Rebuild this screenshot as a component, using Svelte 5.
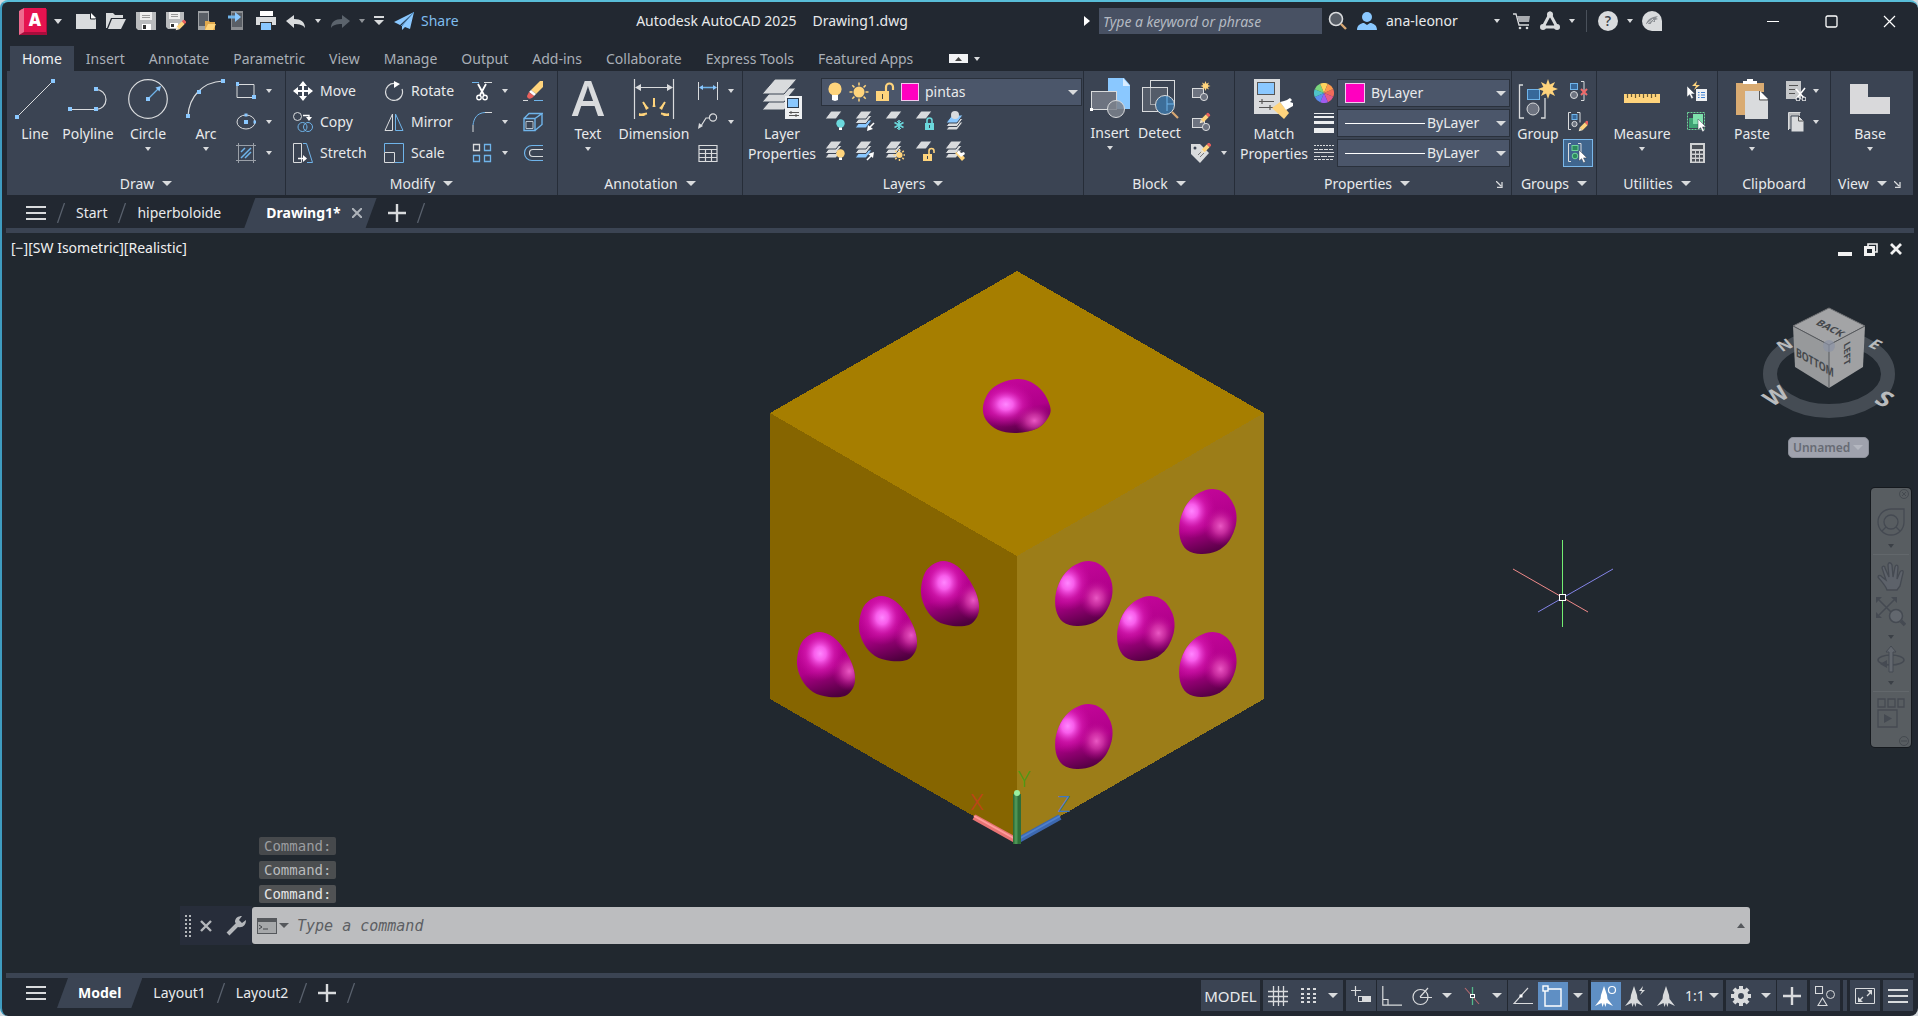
<script>
  const W = '#d9dbdd';
  const B = '#6fb4ea';
  const SKY = '#8ac8ff';
  const Y = '#ffd47c';
  const T = '#6bd8dc';
  const BG = '#3b4453';

  const dot = (x, y, s = 4) => `<rect x="${x - s / 2}" y="${y - s / 2}" width="${s}" height="${s}" fill="${SKY}"/>`;
  const line = (d, c = W, w = 1) => `<path d="${d}" fill="none" stroke="${c}" stroke-width="${w}"/>`;
  const fill = (d, c = W) => `<path d="${d}" fill="${c}"/>`;
  const sheet = (x, y, c = W) => `<path d="M${x + 6} ${y}h11l-6 8h-11z" fill="${c}" stroke="${BG}"/>`;
  const stack = (c1 = W, c2 = W, c3 = W) => sheet(0, 9, c3) + sheet(0, 4.5, c2) + sheet(0, 0, c1);
  const bulb = (x, y, c) => `<circle cx="${x}" cy="${y}" r="4.2" fill="${c}"/><rect x="${x - 1.5}" y="${y + 4}" width="3" height="2.5" fill="#fff"/>`;
  const sun = (x, y, r, len) =>
    `<circle cx="${x}" cy="${y}" r="${r}" fill="${Y}"/>` +
    [0, 45, 90, 135, 180, 225, 270, 315]
      .map((a) => `<path d="M${x} ${y - r - 1}v-${len}" stroke="${Y}" stroke-width="1.5" transform="rotate(${a} ${x} ${y})"/>`)
      .join('');
  const star = (x, y, r) => {
    const p = [];
    for (let i = 0; i < 16; i++) {
      const d = i % 2 ? r * 0.5 : r;
      const a = (i * Math.PI) / 8;
      p.push(`${(x + d * Math.sin(a)).toFixed(1)},${(y - d * Math.cos(a)).toFixed(1)}`);
    }
    return `<polygon points="${p.join(' ')}" fill="${Y}"/>`;
  };
  const pencil = (x, y) =>
    `<g transform="translate(${x} ${y}) rotate(45)"><rect x="-2" y="-6" width="4" height="3" rx="1" fill="#e8605c"/><rect x="-2" y="-3" width="4" height="7" fill="${Y}"/><path d="M-2 4h4l-2 3.5z" fill="#f3e6c8"/></g>`;
  const cursor = (x, y) => `<path transform="translate(${x} ${y})" d="M0 0v11l2.6-2.3 1.9 4 1.9-.9-1.9-3.9h3.5z" fill="#fff" stroke="${BG}" stroke-width=".5"/>`;
  const padlock = (x, y, c, open) =>
    `<rect x="${x}" y="${y}" width="9" height="7" fill="${c}"/>` +
    (open ? line(`M${x + 6} ${y}v-3a2.5 2.5 0 0 1 5 0v2`, c, 1.6) : line(`M${x + 2} ${y}v-2.5a2.5 2.5 0 0 1 5 0v2.5`, c, 1.6)) +
    `<rect x="${x + 4}" y="${y + 2}" width="1" height="3" fill="${BG}"/>`;
  const anno = 'M12 2l3 9 .5 4 5.500 7-6.500-3-1 4-1.500-4-1.500 4-1-4L3 22l5.500-7 .5-4z';

  // name: [width, height, markup]
  const icons = {
    logo: [28, 27, `${fill('M2 1h26v26H0V5z', '#a80d3c')}${fill('M5 0h22v24H5z', '#e5134f')}${fill('M0 3l5-3v24l-5 3z', '#ee6a8e')}<text x="16" y="18" text-anchor="middle" font-family="Open Sans, sans-serif" font-size="17" font-weight="800" fill="#fff">A</text>`],
    newFile: [20, 20, fill('M0 3h14l6 5v10H0z') + fill('M15 2l5 5h-5z', '#fff') + line('M14.500 3v5h5', '#23282f')],
    open: [20, 20, fill('M0 2h7l2 2h8v3H5L1 17H0z') + fill('M6 8h14l-5 10H2z')],
    save: [20, 20, fill('M0 1h20v18H2l-2-2z', '#b9bbbd') + fill('M4 1h12v8H4z', '#eee') + fill('M6 4h8v1H6zM6 6h8v1H6z', '#999') + fill('M6 13h9v6H6z', '#fff') + fill('M7 14h3v4H7z', '#333')],
    saveAs: [20, 20, fill('M0 1h18v12l-6 5H2l-2-2z', '#b9bbbd') + fill('M3 1h11v7H3z', '#eee') + fill('M5 3h7v1H5zM5 5h7v1H5z', '#999') + fill('M4 12h8v5H4z', '#fff') + fill('M5 13h3v3H5z', '#333') + pencil(15, 14)],
    phoneOpen: [20, 20, fill('M2 0h11v19H2z', '#a0a3a6') + fill('M3 2h9v13H3z', '#5a5f66') + fill('M9 10h4l1 1h5v8H9z', '#e0a94e') + fill('M12 13h8l-3 6H9z', Y)],
    phoneSave: [20, 20, fill('M5 0h12v19H5z', '#8a8d91') + fill('M6 2h10v14H6z', '#5a5f66') + line('M2 6h8', B, 3) + fill('M9 1l6 5-6 5z', SKY)],
    print: [20, 20, fill('M4 0h13v5H4z', '#fff') + fill('M0 6h20v8H0z') + fill('M4 11h12v8H4z', '#333') + fill('M5 12h10v7H5z', SKY)],
    undo: [20, 20, fill('M0 10l8-6v4c7 0 11 3 11 9-2-3-5-4-11-4v4z')],
    redo: [20, 20, fill('M20 10l-8-6v4C5 8 1 11 1 17c2-3 5-4 11-4v4z', '#5b636c')],
    qatMenu: [10, 10, fill('M0 0h10v2H0zM0 4h10L5 9z')],
    plane: [20, 20, fill('M20 1L0 11l6 3zM20 1L8 15v4l3-3 5 2z', SKY) + line('M20 1L7 15', '#4c8fc9')],
    arrowR: [6, 12, fill('M0 1l6 5-6 5z', '#fff')],
    search: [20, 20, `<circle cx="8" cy="8" r="6.5" fill="#575d66" stroke="${W}" stroke-width="1.6"/>` + line('M13 13l5 5', '#d8a873', 2.4)],
    person: [20, 20, `<circle cx="10" cy="6" r="5" fill="${SKY}"/>` + fill('M0 19c0-5 4-7 7-7l3 2 3-2c3 0 7 2 7 7z', SKY)],
    cart: [18, 18, line('M0 2h3l3 11h10', W, 1.3) + fill('M4 4h13l-1 6H6z', '#a9acb0') + `<circle cx="7" cy="16" r="1.3" fill="${W}"/><circle cx="14" cy="16" r="1.3" fill="${W}"/>`],
    a360: [20, 20, line('M10 3L3 16h14z', W, 3) + `<circle cx="10" cy="3.5" r="3" fill="${W}"/><circle cx="3" cy="16" r="3" fill="${W}"/><circle cx="17" cy="16" r="3" fill="${W}"/>`],
    help: [20, 20, `<circle cx="10" cy="10" r="10" fill="${W}"/><text x="10" y="15" text-anchor="middle" font-family="Open Sans, sans-serif" font-size="14" font-weight="600" fill="#3a4048">?</text>`],
    assist: [20, 20, fill('M10 0a10 10 0 0 1 10 10v10H10A10 10 0 0 1 10 0z') + fill('M4 13c2-5 5-7 12-8l-2 2 2 1-3 1v2l-3 0-1 2z', '#8a8e93') + line('M5 13l6-5M9 13l3-4', W)],
    min: [12, 12, line('M0 6.500h12', '#fff', 1)],
    max: [13, 13, '<rect x="1" y="1" width="11" height="11" rx="1.5" fill="none" stroke="#fff" stroke-width="1.3"/>'],
    close: [13, 13, line('M1 1l11 11M12 1L1 12', '#fff', 1.2)],
    ribbonToggle: [19, 9, fill('M0 0h19v9H0z', '#f2f3f5') + fill('M6 7h7L9.500 3z', '#444')],

    line: [40, 40, line('M2 38L38 2') + dot(2, 38) + dot(38, 2)],
    polyline: [40, 40, line('M2 30.500h26a10 10 0 0 0 0-20', W, 1.2) + dot(2, 30) + dot(28, 30) + dot(28, 10)],
    circle: [40, 40, `<circle cx="20" cy="20" r="19.3" fill="none" stroke="${W}" stroke-width="1.2"/>` + line('M20 20L30 10', B, 1.3) + fill('M33 7l-1.500 5.500-4-4z', SKY) + dot(20, 20)],
    arc: [40, 40, line('M2 37C3 18 16 3 37 2', W, 1.2) + dot(2, 37) + dot(13, 13) + dot(37, 2)],
    rect: [20, 20, line('M1 3.500h17v13H1z') + dot(1, 3) + dot(18, 16)],
    ellipse: [20, 20, `<ellipse cx="10" cy="10" rx="9" ry="7" fill="none" stroke="${W}"/>` + dot(10, 10) + dot(10, 3, 3) + dot(19, 10, 3)],
    hatch: [20, 20, line('M2.500 0v20M17.500 0v20M0 2.500h20M0 17.500h20', '#9aa0a8') + line('M5 9l4-4M5 15L15 5M9 15l6-6', B, 1.5)],

    move: [20, 20, line('M10 2v16M2 10h16', '#fff', 2) + fill('M10 0l4 5H6zM10 20l4-5H6zM0 10l5-4v8zM20 10l-5-4v8z', '#fff')],
    copy: [20, 20, `<circle cx="4.5" cy="4.5" r="4" fill="none" stroke="${W}"/><circle cx="9.5" cy="15" r="4.5" fill="none" stroke="${B}"/><circle cx="15" cy="15" r="4.5" fill="none" stroke="${B}"/>` + line('M10 3.500h6v3', '#fff', 1.3) + fill('M13 5h6l-3 4z', '#fff')],
    stretch: [20, 20, line('M.5 .5h8v19h-8z') + line('M10 .5h3.500l6 19H14', B) + line('M5 15.500h7', '#fff', 1.4) + fill('M10 12l4 3.500-4 3.500z', '#fff')],
    rotate: [20, 20, line('M11 2.500A8.500 8.500 0 1 0 18 8', W, 1.2) + fill('M10 0l6 3-6 4z', '#fff')],
    mirror: [20, 20, line('M8.500 2v16.500H1z') + line('M11.500 2v16.500H19z', B)],
    scale: [20, 20, line('M.5 9V.5h19v19H11', B) + line('M.5 9.500h10v10H.5z')],
    trim: [20, 20, line('M0 1.500h7', B) + line('M12 1.500h8', W) + line('M6 3l6 11M14 3L8 14', '#fff', 1.8) + '<circle cx="7" cy="16.5" r="2.2" fill="none" stroke="#fff" stroke-width="1.4"/><circle cx="13" cy="16.5" r="2.2" fill="none" stroke="#fff" stroke-width="1.4"/>'],
    fillet: [20, 20, line('M1 20v-7', W) + line('M1 13C2 6 5 1 13 .5', B) + line('M13 .5h7', W)],
    array: [20, 20, line('M1.500 12.500h6v6h-6zM12.500 12.500h6v6h-6zM12.500 1.500h6v6h-6z', B, 1.3) + line('M1.500 1.500h6v6h-6z', W, 1.3)],
    erase: [20, 20, fill('M8 9l9-9h3v6l-7 7z', Y) + fill('M8 9l5 4-2 2-5-4z', '#fff') + fill('M6 11l5 4c-3 4-7 3-7 0z', '#e8605c') + line('M0 19.500h5', W) + line('M11 19.500h9', B)],
    explode: [20, 20, line('M1 6.500h11v12H1zM1 6.500l5-5h13l-7 5M19 1.500v11l-7 6', B, 1.4) + line('M3 9.500h7v7H3z', '#b8c4d0')],
    offset: [20, 20, line('M20 2.500H9a7 7 0 0 0 0 15h11', B, 1.2) + line('M20 6.500H10a3.500 3.500 0 0 0 0 7h10', W, 1.2)],

    text: [40, 40, '<text x="20" y="37" text-anchor="middle" font-family="Open Sans, sans-serif" font-size="49" font-weight="600" fill="#d9dbdd">A</text>'],
    dimension: [40, 40, line('M.5 0v40M39.500 0v40', W, 1.2) + line('M3 8.500h34', W) + fill('M1 8.500l6-3.500v7zM39 8.500l-6-3.500v7z') + fill('M18.500 28l1.500-8 1.500 8zM12 31l-3-7 6 5zM28 31l3-7-6 5zM12 37H5v-3zM28 37h7v-3z', Y) + line('M20 19v8M9 23l4 6M31 23l-4 6M5 36l8-1.500M35 36l-8-1.500', Y, 2)],
    dimLinear: [20, 20, line('M.5 1v18M19.500 1v18') + line('M3 6.500h14', B, 1.3) + fill('M1 6.500l4-2.500v5zM19 6.500l-4-2.500v5z', SKY)],
    leader: [20, 20, `<circle cx="15" cy="5.5" r="3.6" fill="none" stroke="${W}" stroke-width="1.2"/>` + line('M11 6H8L3 14', W, 1.2) + fill('M0 17l1-6 4 3z')],
    table: [20, 20, line('M1 2.500h18v16H1zM1 6.500h18M1 10.500h18M1 14.500h18M7.500 7v11M13.500 7v11', W, 1.2)],

    layerProps: [40, 40, `<g fill="${W}" stroke="${BG}"><path d="M12 17h22L22 31H0z"/><path d="M12 9h22L22 23H0z"/><path d="M13 0h22L22 15H0z"/></g><rect x="23" y="17" width="17" height="23" fill="#eef0f2"/><rect x="25.5" y="19.5" width="11" height="9" fill="${SKY}" stroke="#2b3a4d"/>` + line('M27 33.500h10M27 36.500h10M29 32v3M34 35v3', '#555')],
    bulb: [16, 20, `<circle cx="8" cy="7" r="6.6" fill="${Y}"/>` + fill('M5 13h6v5l-3 1-3-1z', '#fff')],
    sun: [20, 20, sun(10, 10, 5.5, 3)],
    unlock: [20, 20, fill('M1 9h13v10H1z', Y) + line('M11 9V5a3.500 3.500 0 0 1 7 0v3', Y, 2.2) + fill('M7 12h1v5H7z', '#444')],
    layOff: [20, 20, sheet(0, 0) + bulb(15.5, 12.5, T)],
    layIso: [20, 20, stack(W, W, SKY) + line('M19 12l-4 4', '#fff', 1.6) + fill('M12 20l1-6 5 4z', '#fff')],
    layFrz: [20, 20, sheet(0, 0) + line('M14 9v10M9.500 11.500l9 5M18.500 11.500l-9 5', T, 1.6) + line('M12 10l2 2 2-2M12 18l2-2 2 2', T)],
    layLock: [20, 20, sheet(0, 0) + padlock(10, 12, T, false)],
    layCur: [20, 20, sheet(1, 11) + sheet(1, 7.5) + sheet(1, 4, SKY) + `<circle cx="10" cy="4" r="4" fill="${W}"/>`],
    layOn: [20, 20, stack() + bulb(15.5, 12.5, Y)],
    layUniso: [20, 20, stack(W, W, SKY) + line('M12 19l4-4', '#fff', 1.6) + fill('M19 11l-1 6-5-4z', '#fff')],
    layThaw: [20, 20, stack() + sun(14.5, 14, 3, 2)],
    layUnlock: [20, 20, sheet(0, 0) + padlock(8, 13, Y, true)],
    layMatch: [20, 20, stack() + fill('M10 12l4-2 6 7-3 3z', Y) + fill('M13 9l3 3 3-1 1 2-4 3-4-4z', '#fff')],

    insert: [40, 40, fill('M18 0h16l6 7v24H18z', SKY) + fill('M33 0v8h7z', '#d8ecff') + `<rect x="1.5" y="13.5" width="25" height="18" fill="#6d7380" stroke="${W}"/><circle cx="26" cy="31" r="8.5" fill="#7b818c" fill-opacity=".85" stroke="${W}"/><rect x="0" y="30" width="3" height="3" fill="#fff"/>`],
    detect: [40, 40, `<rect x="10.5" y="2.5" width="24" height="24" fill="none" stroke="${W}"/><rect x="2.5" y="9.5" width="25" height="24" fill="#6d7380" fill-opacity=".5" stroke="${W}"/><circle cx="25" cy="27" r="9.5" fill="#3d6e99" stroke="${W}"/>` + line('M27 18v15M27 26h7', B) + line('M32 34l6 6', '#d8a873', 2.2)],
    blockNew: [20, 20, `<rect x="1.5" y="7.5" width="11" height="9" fill="#6d7380" stroke="${W}"/><circle cx="13" cy="16" r="3.6" fill="#6d7380" stroke="${W}"/>` + star(14.5, 5, 5)],
    blockEdit: [20, 20, `<rect x="1.5" y="6.5" width="12" height="9" fill="#6d7380" stroke="${W}"/><circle cx="15" cy="15" r="3.6" fill="#6d7380" stroke="${W}"/>` + pencil(14, 6)],
    tag: [20, 20, fill('M0 1l9 0 9 9-9 10L0 11z') + `<circle cx="4" cy="5" r="1.5" fill="${BG}"/>` + line('M7 12l4-4M9 14l4-4', '#777') + pencil(15, 5)],

    match: [40, 40, fill('M0 0h26v35H0z') + `<rect x="3.5" y="3.5" width="17" height="12" fill="${SKY}" stroke="#555"/>` + line('M5 22.500h15M5 28.500h15M8 20v5M16 26v5', '#555', 1.2) + fill('M18 29l8-6 9 11-5 6z', Y) + fill('M26 23l6 8 7-4v-3l-3-1 2-2-2-2-3 2-3 1z', '#fff')],
    wheel: [20, 20, ['#f26b5b', '#e85a8a', '#a05cf0', '#5b8df0', '#4fc3c9', '#7ad67c', '#ffd35c', '#ff9a4d'].map((c, i) => `<path d="M10 10L10 0A10 10 0 0 1 17.1 2.9z" fill="${c}" transform="rotate(${i * 45 + 67} 10 10)"/>`).join('')],
    weights: [20, 20, fill('M0 0h20v1H0zM0 3h20v2H0zM0 8h20v3H0zM0 15h20v5H0z', '#eceef0')],
    ltypes: [20, 20, '<g stroke="#d9dbdd"><path d="M0 2.500h20" stroke-dasharray="2 1"/><path d="M0 6.500h20" stroke-dasharray="4 1"/><path d="M0 9.500h20"/><path d="M0 13.500h20" stroke-dasharray="6 1"/><path d="M0 16.500h20" stroke-dasharray="3 1"/></g>'],

    group: [40, 40, line('M5 6H1.500v33H6M23 39h4V19', W, 1.3) + `<rect x="9.5" y="10.5" width="12" height="10" fill="#37689a" stroke="${B}"/><circle cx="15" cy="30" r="6" fill="#6d7380" stroke="${W}"/>` + star(30, 10, 10)],
    ungroup: [20, 20, line('M13 .5h3v19h-3', W) + `<rect x="2.5" y="2.5" width="7" height="6" fill="#37689a" stroke="${B}"/><circle cx="6" cy="14" r="3.5" fill="#6d7380" stroke="${W}"/>` + line('M13 8l6 6M19 8l-6 6', '#ef6a6a', 2)],
    groupEdit: [20, 20, line('M3 .5H.5v17H3M9 .5h3v10', W) + `<rect x="4" y="2.5" width="5" height="5" fill="#37689a" stroke="${B}"/><circle cx="6.5" cy="12" r="2.6" fill="#6d7380" stroke="${W}"/>` + pencil(16, 14)],
    groupSel: [20, 20, line('M3 .5H.5v18H3M10 .5h3v10', W) + '<rect x="4" y="2.5" width="6" height="5" fill="#2c8a5d" stroke="#6fd49b"/><circle cx="7" cy="13" r="2.8" fill="#2c8a5d" stroke="#6fd49b"/>' + cursor(11, 7)],
    ruler: [40, 40, fill('M2 15h36v9H2z', Y) + line('M5.500 15v4M9.500 15v3M13.500 15v4M17.500 15v3M21.500 15v4M25.500 15v3M29.500 15v4M33.500 15v3', '#6b5a33', 1.2)],
    quickSel: [20, 20, fill('M10 0l-5 5h4l-2 4 6-5H9z', Y) + cursor(0, 5) + '<rect x="9" y="8" width="11" height="12" fill="#eef0f2"/>' + line('M14 11.500h4M14 14h4M14 16.500h4M11 11.500h1.500M11 14h1.500M11 16.500h1.500', '#3d7fd0', 1.2)],
    selAll: [20, 20, '<rect x=".5" y=".5" width="17" height="17" fill="none" stroke="#6fd49b" stroke-dasharray="2 1"/><path d="M2 6h9v10H2z" fill="#3fa374"/><path d="M6 2h10v10H6z" fill="#7ee0ac"/>' + cursor(11, 7)],
    calc: [20, 20, fill('M3 0h15v20H3z', '#cfd1d3') + fill('M5 2h11v4H5z', '#4a4f57') + [0, 4, 8].map((y) => [0, 4, 8].map((x) => `<rect x="${5 + x}" y="${8 + y}" width="3" height="2.5" fill="#4a4f57"/>`).join('')).join('')],
    paste: [40, 40, fill('M4 4h28v9H15v23H4z', '#d9ab72') + fill('M11 5V2h4V0h6v2h4v3z', '#fff') + fill('M13 12h14l9 9v19H13z') + fill('M28 12l8 8h-8z', '#fff') + line('M27.500 12v9H36', '#555')],
    cut: [20, 20, fill('M0 0h15v18H0z', '#c6c8ca') + line('M3 4.500h9M3 8.500h6M3 12.500h6', '#555', 1.2) + line('M10 8l8 9M19 7l-8 10', '#fff', 1.6) + `<circle cx="12" cy="18" r="2" fill="${BG}" stroke="#fff"/><circle cx="18" cy="18" r="2" fill="${BG}" stroke="#fff"/>`],
    copyClip: [20, 20, line('M2.500 18V.5h12', W) + fill('M3 1h11v16H3z', '#b9bbbd') + `<path d="M5 4h8l5 5v11H5z" fill="${W}" stroke="${BG}"/>` + line('M12.500 4v5h5', '#555')],
    base: [40, 40, fill('M0 5h18v13h22v17H0z', '#d9d9db')],
    launcher: [7, 7, line('M0 0l5 5M6 1v5.500H1', W, 1.3)],

    menu: [20, 14, fill('M0 0h20v2H0zM0 6h20v2H0zM0 12h20v2H0z')],
    slash: [8, 20, line('M7.500 0L.5 20', '#59616d', 1.3)],
    plus: [18, 18, line('M9 0v18M0 9h18', W, 2.4)],
    tabClose: [10, 10, line('M0 0l10 10M10 0L0 10', '#aeb3ba', 2)],
    vpMin: [14, 13, fill('M0 9h14v4H0z', '#f2f2f2')],
    vpMax: [14, 13, line('M4 3V1h9v8h-2', '#f2f2f2', 1.6) + '<rect x="1.5" y="4.5" width="8" height="7" fill="none" stroke="#f2f2f2" stroke-width="3"/>'],
    vpClose: [12, 12, line('M1 1l10 10M11 1L1 11', '#f2f2f2', 2.8)],

    navClose: [10, 10, '<circle cx="5" cy="5" r="4.5" fill="none" stroke="#454a50"/><path d="M3 3l4 4M7 3l-4 4" stroke="#454a50"/>'],
    navMin: [10, 10, '<circle cx="5" cy="5" r="4.5" fill="none" stroke="#454a50"/><path d="M2 5h6" stroke="#454a50"/>'],
    navWheel: [28, 28, '<g fill="none" stroke="#454a52" stroke-width="1.3"><path d="M14 1h13v13A13 13 0 1 1 14 1z"/><circle cx="14" cy="14" r="7"/><path d="M9 19l-4 4M19 19l4 4"/></g>'],
    navPan: [28, 30, '<path d="M10 29c-1-4-6-9-9-13 0-2 3-2 4 0l4 3-4-12c0-2 3-3 3 0l4 9-1-12c0-3 3-3 4 0l1 12 2-10c1-3 3-2 3 0l-1 12 3-7c1-2 4-2 3 1l-3 13-3 4z" fill="#5d626a" stroke="#454a52" stroke-width="1.3"/>'],
    navZoom: [30, 30, '<path d="M3 3l15 15M18 3L3 18" stroke="#454a52" stroke-width="1.5"/><path d="M0 0h6L0 6zM21 0v6l-6-6zM0 21v-6l6 6z" fill="#454a52"/><circle cx="20" cy="19" r="6.5" fill="#62676e" stroke="#454a52" stroke-width="1.5"/><path d="M25 24l4 4" stroke="#454a52" stroke-width="3.5"/>'],
    navOrbit: [28, 28, '<ellipse cx="14" cy="15" rx="13" ry="5" fill="none" stroke="#454a52" stroke-width="1.5"/><path d="M14 1l5 6h-3v20h-4V7H9z" fill="#62676e" stroke="#454a52"/><path d="M3 19l7-4v8z" fill="#454a52"/>'],
    navMotion: [28, 30, '<g fill="none" stroke="#454a52" stroke-width="1.3"><path d="M1 1h7v8H1zM11 1h7v8h-7zM21 1h6v8h-6zM1 12h19v17H1z"/></g><path d="M7 16l8 4.500L7 25z" fill="#454a52"/>'],

    grip: [6, 22, [0, 4, 8, 12, 16, 20].map((y) => fill(`M0 ${y}h2v2H0zM4 ${y}h2v2H4z`, '#b4b7bb')).join('')],
    cmdClose: [12, 12, line('M1 1l10 10M11 1L1 11', '#b4b7bb', 2.4)],
    wrench: [20, 20, line('M2 18L12 8', '#b4b7bb', 4) + fill('M9 6c0-4 3-6 7-6l-3 4 3 3 4-3c0 5-3 8-8 7z', '#b4b7bb')],
    prompt: [20, 16, '<rect x=".5" y=".5" width="19" height="15" fill="#a6a8aa" stroke="#55585c"/><path d="M0 0h20v4H0z" fill="#55585c"/><path d="M2 7l3 2-3 2M6 11h5" fill="none" stroke="#44474b"/>'],

    sbGrid: [20, 20, line('M5.500 0v20M10.500 0v20M15.500 0v20M0 5.500h20M0 10.500h20M0 15.500h20', W, 1.3)],
    sbSnap: [20, 20, [2, 7, 11, 15].map((y) => [3, 9, 15].map((x) => fill(`M${x} ${y}h3v2h-3z`)).join('')).join('')],
    sbDyn: [20, 20, line('M4.500 0v10M0 4.500h10', W, 1.2) + `<rect x="7.5" y="10.5" width="12" height="5" fill="${W}" stroke="${W}"/>` + fill('M8 11h3v4H8z', BG)],
    sbOrtho: [20, 20, line('M.8 0v19.200H20M.8 13.500H6v6', W, 1.2)],
    sbPolar: [20, 20, `<circle cx="8.5" cy="11" r="7.5" fill="none" stroke="${W}" stroke-width="1.2"/>` + line('M8 11.500h12M8 11l8-9', W, 1.2)],
    sbIso: [20, 20, line('M10.500 1v18', '#55b98a', 1.3) + line('M3 2l14 16', '#b96a70', 1.1) + `<rect x="8.5" y="8.5" width="4" height="3" fill="${BG}" stroke="#fff"/>`],
    sbTrack: [20, 20, line('M15 2L1 17.500h19', W, 1.2) + '<rect x="6.5" y="8.5" width="3" height="3" fill="#fff"/>'],
    sbOsnap: [22, 22, line('M3 6v15h16V4H6', '#fff', 1.4) + '<rect x="1" y="1" width="5" height="5" fill="#5f8fc4" stroke="#fff" stroke-width="1.4"/>'],
    sbAnnoVis: [24, 24, `<g transform="translate(-2 0)">${fill(anno, '#fff')}</g><circle cx="18" cy="6" r="3.5" fill="none" stroke="#fff" stroke-width="1.2"/>`],
    sbAnnoAuto: [24, 24, `<g transform="translate(-2 0)">${fill(anno)}</g>` + fill('M19 2l-4 5h3l-2 4 5-5h-3z')],
    sbAnno: [24, 24, fill(anno)],
    sbGear: [20, 20, `<circle cx="10" cy="10" r="5.2" fill="none" stroke="${W}" stroke-width="4.5"/>` + [0, 45, 90, 135, 180, 225, 270, 315].map((a) => `<path d="M8 0h4v4H8z" fill="${W}" transform="rotate(${a} 10 10)"/>`).join('')],
    sbIsolate: [20, 20, line('M.5 .5h7v7h-7zM7.500 12l4.500 7.500H3z', W, 1.1) + `<circle cx="15.5" cy="8.5" r="4" fill="none" stroke="${W}"/>`],
    sbFull: [20, 16, line('M.5 .5h19v15H.5z', W) + line('M12 8l4-4M8 9l-4 4', W, 1.3) + fill('M17 2v5l-5-5zM3 14V9l5 5z')]
  };

  const quick = ['newFile', 'open', 'save', 'saveAs', 'phoneOpen', 'phoneSave', 'print', 'undo'];
  const ribbonTabs = ['Home', 'Insert', 'Annotate', 'Parametric', 'View', 'Manage', 'Output', 'Add-ins', 'Collaborate', 'Express Tools', 'Featured Apps'];
  const layerTools = ['layOff', 'layIso', 'layFrz', 'layLock', 'layCur', 'layOn', 'layUniso', 'layThaw', 'layUnlock', 'layMatch'];
  const history = ['Command:', 'Command:', 'Command:'];
  const status = [
    { items: ['sbGrid', 'sbSnap', 'caret'] },
    { items: ['sbDyn'] },
    { items: ['sbOrtho', 'sbPolar', 'caret', 'sbIso', 'caret'], tight: true },
    { items: ['sbTrack', 'sbOsnap', 'caret'], tight: true },
    { items: ['sbAnnoVis', 'sbAnnoAuto', 'sbAnno', 'scale'] },
    { items: ['sbGear', 'caret'] },
    { items: ['plus'], tight: true },
    { items: ['sbIsolate'] },
    { items: [] },
    { items: ['sbFull'] },
    { items: ['menu'] }
  ];
  const active = ['sbOsnap', 'sbAnnoVis'];

  const outlines = {
    top: [[34, 0], [48, 3], [60, 13], [67, 27], [66, 37], [55, 49], [34, 54], [15, 51], [3, 41], [0, 28], [6, 13], [18, 4]],
    left: [[23, 0], [36, 5], [47, 17], [55, 32], [58, 45], [56, 56], [48, 64], [32, 65], [16, 60], [5, 48], [0, 32], [3, 14], [11, 4]],
    right: [[34, 0], [47, 5], [56, 19], [57, 35], [50, 52], [38, 62], [22, 65], [8, 61], [1, 49], [1, 32], [8, 15], [20, 4]]
  };
  // highlight and secondary glint centres on each kind of pip
  const lights = {
    top: { shine: ['.34', '.47'], glint: ['.76', '.77'] },
    left: { shine: ['.4', '.33'], glint: ['.9', '.6'] },
    right: { shine: ['.22', '.34'], glint: ['.72', '.57'] }
  };
  const pips = [
    { face: 'top', x: 217, y: 111 },
    { face: 'left', x: 31, y: 364 },
    { face: 'left', x: 93, y: 328 },
    { face: 'left', x: 155, y: 293 },
    { face: 'right', x: 413, y: 221 },
    { face: 'right', x: 289, y: 293 },
    { face: 'right', x: 351, y: 328 },
    { face: 'right', x: 413, y: 364 },
    { face: 'right', x: 289, y: 436 }
  ];

  // closed Catmull-Rom curve through the outline points
  function outline(p) {
    const n = p.length;
    let d = `M${p[0]}`;
    for (let i = 0; i < n; i++) {
      const a = p[(i + n - 1) % n];
      const b = p[i];
      const c = p[(i + 1) % n];
      const e = p[(i + 2) % n];
      d += `C${b[0] + (c[0] - a[0]) / 6} ${b[1] + (c[1] - a[1]) / 6} ${c[0] - (e[0] - b[0]) / 6} ${c[1] - (e[1] - b[1]) / 6} ${c}`;
    }
    return d + 'z';
  }
</script>

{#snippet icon(name)}
  {@const [w, h, body] = icons[name]}
  <svg width={w} height={h} viewBox="0 0 {w} {h}" aria-hidden="true">{@html body}</svg>
{/snippet}

{#snippet caret(size = 'small')}
  <span class="caret {size}"></span>
{/snippet}

{#snippet big(name, label, arrow = false)}
  <button class="big">
    {@render icon(name)}
    <span>{label}</span>
    {#if arrow}{@render caret()}{/if}
  </button>
{/snippet}

{#snippet tool(name, arrow = false)}
  <div class="row">
    <button class="tool" aria-label={name}>{@render icon(name)}</button>
    {#if arrow}<button class="drop" aria-label="{name} options">{@render caret()}</button>{/if}
  </div>
{/snippet}

{#snippet labelled(name, label)}
  <div class="row"><button class="tool labelled">{@render icon(name)}{label}</button></div>
{/snippet}

{#snippet foot(title, arrow = true, launch = false)}
  <footer>
    <button>{title}{#if arrow}{@render caret('large')}{/if}</button>
    {#if launch}<button class="launch" aria-label="{title} settings">{@render icon('launcher')}</button>{/if}
  </footer>
{/snippet}

<div class="window">
  <header class="titlebar">
    <div class="quick">
      <button class="app" aria-label="AutoCAD">{@render icon('logo')}{@render caret('mid')}</button>
      {#each quick as name}
        <button aria-label={name}>{@render icon(name)}</button>
      {/each}
      <button class="nudge" aria-label="Undo history">{@render caret()}</button>
      <button aria-label="redo">{@render icon('redo')}</button>
      <button class="nudge dim" aria-label="Redo history">{@render caret()}</button>
      <button aria-label="Customize">{@render icon('qatMenu')}</button>
      <button class="share">{@render icon('plane')}Share</button>
    </div>
    <h1><span>Autodesk AutoCAD 2025</span><span>Drawing1.dwg</span></h1>
    <div class="info">
      {@render icon('arrowR')}
      <input class="search" type="text" placeholder="Type a keyword or phrase" aria-label="Search" />
      <button aria-label="Search">{@render icon('search')}</button>
      {@render icon('person')}
      <button class="account"><span>ana-leonor</span>{@render caret()}</button>
      <button aria-label="Store">{@render icon('cart')}</button>
      <button aria-label="Apps">{@render icon('a360')}</button>
      {@render caret()}
      <span class="sep"></span>
      <button aria-label="Help">{@render icon('help')}</button>
      {@render caret()}
      <button aria-label="Assistant">{@render icon('assist')}</button>
    </div>
    <div class="controls">
      <button aria-label="Minimize">{@render icon('min')}</button>
      <button aria-label="Maximize">{@render icon('max')}</button>
      <button aria-label="Close">{@render icon('close')}</button>
    </div>
  </header>

  <nav class="ribbon-tabs">
    {#each ribbonTabs as tab, i}
      <button class:active={i === 0}>{tab}</button>
    {/each}
    <button class="collapse" aria-label="Minimize ribbon">{@render icon('ribbonToggle')}{@render caret()}</button>
  </nav>

  <div class="ribbon">
    <section class="panel draw">
      <div class="body">
        {@render big('line', 'Line')}
        {@render big('polyline', 'Polyline')}
        {@render big('circle', 'Circle', true)}
        {@render big('arc', 'Arc', true)}
        <div class="stack">
          {@render tool('rect', true)}
          {@render tool('ellipse', true)}
          {@render tool('hatch', true)}
        </div>
      </div>
      {@render foot('Draw')}
    </section>

    <section class="panel modify">
      <div class="body">
        <div class="stack">
          {@render labelled('move', 'Move')}
          {@render labelled('copy', 'Copy')}
          {@render labelled('stretch', 'Stretch')}
        </div>
        <div class="stack">
          {@render labelled('rotate', 'Rotate')}
          {@render labelled('mirror', 'Mirror')}
          {@render labelled('scale', 'Scale')}
        </div>
        <div class="stack">
          {@render tool('trim', true)}
          {@render tool('fillet', true)}
          {@render tool('array', true)}
        </div>
        <div class="stack">
          {@render tool('erase')}
          {@render tool('explode')}
          {@render tool('offset')}
        </div>
      </div>
      {@render foot('Modify')}
    </section>

    <section class="panel annotation">
      <div class="body">
        {@render big('text', 'Text', true)}
        {@render big('dimension', 'Dimension')}
        <div class="stack">
          {@render tool('dimLinear', true)}
          {@render tool('leader', true)}
          {@render tool('table')}
        </div>
      </div>
      {@render foot('Annotation')}
    </section>

    <section class="panel layers">
      <div class="body">
        {@render big('layerProps', 'Layer Properties')}
        <div class="stack">
          <div class="combo layer">
            {@render icon('bulb')}
            {@render icon('sun')}
            {@render icon('unlock')}
            <span class="swatch"></span>
            <select aria-label="Layer"><option>pintas</option></select>
            {@render caret('large')}
          </div>
          <div class="grid">
            {#each layerTools as name}
              <button class="tool" aria-label={name}>{@render icon(name)}</button>
            {/each}
          </div>
        </div>
      </div>
      {@render foot('Layers')}
    </section>

    <section class="panel block">
      <div class="body">
        {@render big('insert', 'Insert', true)}
        {@render big('detect', 'Detect')}
        <div class="stack">
          {@render tool('blockNew')}
          {@render tool('blockEdit')}
          {@render tool('tag', true)}
        </div>
      </div>
      {@render foot('Block')}
    </section>

    <section class="panel properties">
      <div class="body">
        {@render big('match', 'Match Properties')}
        <div class="stack">
          <div class="prop">
            {@render icon('wheel')}
            <div class="combo">
              <span class="swatch"></span>
              <select aria-label="Object color"><option>ByLayer</option></select>
              {@render caret('large')}
            </div>
          </div>
          <div class="prop">
            {@render icon('weights')}
            <div class="combo">
              <span class="stroke"></span>
              <select aria-label="Lineweight"><option>ByLayer</option></select>
              {@render caret('large')}
            </div>
          </div>
          <div class="prop">
            {@render icon('ltypes')}
            <div class="combo">
              <span class="stroke"></span>
              <select aria-label="Linetype"><option>ByLayer</option></select>
              {@render caret('large')}
            </div>
          </div>
        </div>
      </div>
      {@render foot('Properties', true, true)}
    </section>

    <section class="panel groups">
      <div class="body">
        {@render big('group', 'Group')}
        <div class="stack">
          {@render tool('ungroup')}
          {@render tool('groupEdit')}
          <div class="row"><button class="tool on" aria-label="Group selection">{@render icon('groupSel')}</button></div>
        </div>
      </div>
      {@render foot('Groups')}
    </section>

    <section class="panel utilities">
      <div class="body">
        {@render big('ruler', 'Measure', true)}
        <div class="stack">
          {@render tool('quickSel')}
          {@render tool('selAll')}
          {@render tool('calc')}
        </div>
      </div>
      {@render foot('Utilities')}
    </section>

    <section class="panel clipboard">
      <div class="body">
        {@render big('paste', 'Paste', true)}
        <div class="stack">
          {@render tool('cut', true)}
          {@render tool('copyClip', true)}
        </div>
      </div>
      {@render foot('Clipboard', false)}
    </section>

    <section class="panel view">
      <div class="body">
        {@render big('base', 'Base', true)}
      </div>
      {@render foot('View', true, true)}
    </section>
  </div>

  <nav class="file-tabs">
    <button aria-label="Menu">{@render icon('menu')}</button>
    {@render icon('slash')}
    <button>Start</button>
    {@render icon('slash')}
    <button>hiperboloide</button>
    <button class="active">Drawing1*{@render icon('tabClose')}</button>
    <button aria-label="New drawing">{@render icon('plus')}</button>
    {@render icon('slash')}
  </nav>

  <main class="viewport">
    <div class="vp-head">
      <span>[−][SW Isometric][Realistic]</span>
      <div>
        <button aria-label="Minimize drawing">{@render icon('vpMin')}</button>
        <button aria-label="Restore drawing">{@render icon('vpMax')}</button>
        <button aria-label="Close drawing">{@render icon('vpClose')}</button>
      </div>
    </div>

    <svg class="scene" width="502" height="580" viewBox="0 0 502 580">
      <defs>
        <linearGradient id="shade" x1=".35" y1="0" x2=".6" y2="1">
          <stop offset="0" stop-color="#c4069a" />
          <stop offset=".55" stop-color="#b0008a" />
          <stop offset="1" stop-color="#4e003e" />
        </linearGradient>
        {#each Object.entries(lights) as [face, { shine, glint }]}
          <radialGradient id="shine-{face}" cx={shine[0]} cy={shine[1]} r=".42">
            <stop offset="0" stop-color="#ff86ff" />
            <stop offset=".25" stop-color="#fb62f0" stop-opacity=".95" />
            <stop offset=".6" stop-color="#dc20b8" stop-opacity=".55" />
            <stop offset="1" stop-color="#c80aa0" stop-opacity="0" />
          </radialGradient>
          <radialGradient id="glint-{face}" cx={glint[0]} cy={glint[1]} r=".3">
            <stop offset="0" stop-color="#ea58c4" />
            <stop offset=".4" stop-color="#dc3cb0" stop-opacity=".7" />
            <stop offset="1" stop-color="#b8008f" stop-opacity="0" />
          </radialGradient>
        {/each}
      </defs>
      <g shape-rendering="crispEdges">
        <path d="M251 3L498 145 251 288 4 145z" fill="#a67e00" />
        <path d="M4 145l247 143v285L4 431z" fill="#866500" />
        <path d="M498 145L251 288v285l247-142z" fill="#9c7d18" />
      </g>
      {#each pips as pip}
        {@const d = outline(outlines[pip.face])}
        <g transform="translate({pip.x} {pip.y})">
          <path {d} fill="url(#shade)" />
          <path {d} fill="url(#shine-{pip.face})" />
          <path {d} fill="url(#glint-{pip.face})" />
        </g>
      {/each}
      <g class="axis">
        <path d="M251 573l-43-24" stroke="#e87474" stroke-width="6" />
        <path d="M251 572l-43-24" stroke="#ff9c9c" stroke-width="2" />
        <path d="M251 573l43-24" stroke="#3c68b0" stroke-width="6" />
        <path d="M251 572l43-24" stroke="#4f80cc" stroke-width="2" />
        <path d="M251 576v-50" stroke="#2f6e38" stroke-width="8" />
        <path d="M250 576v-50" stroke="#4d9455" stroke-width="3" />
        <circle cx="251" cy="525" r="3" fill="#9af0a0" />
        <text x="211" y="542" fill="#c0431c">X</text>
        <text x="258" y="519" fill="#4f9a14">Y</text>
        <text x="298" y="544" fill="#3d78c4">Z</text>
      </g>
    </svg>

    <svg class="crosshair" width="102" height="90" viewBox="0 0 102 90">
      <path d="M1 30l75 43" stroke="#ef8a8a" />
      <path d="M101 30L26 73" stroke="#8484e8" />
      <path d="M50 1h1v87h-1z" fill="#72ee72" />
      <rect x="47.5" y="55.5" width="6" height="6" fill="#21282f" stroke="#fff" />
    </svg>

    <svg class="viewcube" width="178" height="130" viewBox="0 0 178 130">
      <ellipse cx="89" cy="84" rx="59" ry="37" fill="none" stroke="#454c54" stroke-width="14" />
      <g class="compass">
        <text transform="matrix(.9 -.4 .6 .7 42 62)" font-size="17">N</text>
        <text transform="matrix(.9 .4 -.7 .6 127 56)" font-size="17">E</text>
        <text transform="matrix(.85 -.5 .7 .7 32 117)" font-size="23">W</text>
        <text transform="matrix(.9 .45 -.6 .7 133 112)" font-size="25">S</text>
      </g>
      <path d="M89 18l36 18-36 19-36-19z" fill="#a3a4a6" stroke="#6f7174" />
      <path d="M53 36l36 19v43L55 77z" fill="#97999b" />
      <path d="M125 36L89 55v43l34-21z" fill="#a0a1a3" />
      <path d="M53 36l36 19 36-19M89 55v43" fill="none" stroke="#55585c" />
      <circle cx="89" cy="56" r="6" fill="#8b93a5" opacity=".7" />
      <g class="faces">
        <text transform="matrix(.87 .45 -.7 .6 75 34)" font-size="11">BACK</text>
        <text transform="matrix(.8 .45 0 1.1 56 66)" font-size="11">BOTTOM</text>
        <text transform="matrix(0 1 -.87 .5 104 54)" font-size="10">LEFT</text>
      </g>
    </svg>

    <div class="ucs">
      <select aria-label="Coordinate system"><option>Unnamed</option></select>
      {@render caret('large')}
    </div>

    <div class="navbar">
      <button class="edge" aria-label="Close bar">{@render icon('navClose')}</button>
      <button aria-label="Wheel">{@render icon('navWheel')}</button>
      {@render caret()}
      <hr />
      <button aria-label="Pan">{@render icon('navPan')}</button>
      <button aria-label="Zoom">{@render icon('navZoom')}</button>
      {@render caret()}
      <button aria-label="Orbit">{@render icon('navOrbit')}</button>
      {@render caret()}
      <hr />
      <button aria-label="ShowMotion">{@render icon('navMotion')}</button>
      <button class="edge last" aria-label="Bar options">{@render icon('navMin')}</button>
    </div>

    <div class="command">
      <div class="history">
        {#each history as text}
          <span>{text}</span>
        {/each}
      </div>
      <div class="line">
        <div class="handle">
          {@render icon('grip')}
          <button aria-label="Close command line">{@render icon('cmdClose')}</button>
          <button aria-label="Customize">{@render icon('wrench')}</button>
        </div>
        <label class="entry">
          {@render icon('prompt')}
          {@render caret('large')}
          <input type="text" placeholder="Type a command" aria-label="Command" />
          <span class="caret up"></span>
        </label>
      </div>
    </div>
  </main>

  <div class="bottom">
    <nav class="layouts">
      <button aria-label="Layouts">{@render icon('menu')}</button>
      <button class="active">Model</button>
      <button>Layout1</button>
      {@render icon('slash')}
      <button>Layout2</button>
      {@render icon('slash')}
      <button aria-label="New layout">{@render icon('plus')}</button>
      {@render icon('slash')}
    </nav>
    <div class="status">
      <div class="cell"><button class="model">MODEL</button></div>
      {#each status as group}
        <div class="cell" class:tight={group.tight} class:empty={!group.items.length}>
          {#each group.items as name}
            {#if name === 'caret'}
              <button class="arrow" aria-label="Options">{@render caret('large')}</button>
            {:else if name === 'scale'}
              <button class="ratio">1:1{@render caret('large')}</button>
            {:else}
              <button class="slot" class:on={active.includes(name)} aria-label={name}>{@render icon(name)}</button>
            {/if}
          {/each}
        </div>
      {/each}
    </div>
  </div>
</div>

<style>
  :global(body) {
    background: #d5dade;
  }
  .window {
    box-sizing: border-box;
    display: flex;
    flex-direction: column;
    min-height: 100vh;
    background: #222831;
    border-top: 2px solid #58bdd8;
    border-left: 2px solid #3f9cc0;
    border-radius: 8px;
    overflow: hidden;
    color: #e8eaec;
    font-family: "Noto Sans", sans-serif;
    font-size: 14px;
    line-height: 20px;
  }
  button,
  select,
  input {
    margin: 0;
    padding: 0;
    border: 0;
    background: none;
    color: inherit;
    font: inherit;
    outline: none;
  }
  button {
    display: flex;
    align-items: center;
    white-space: nowrap;
  }
  svg {
    display: block;
    flex: none;
  }
  select {
    appearance: none;
    flex: 1;
    min-width: 0;
  }

  .caret {
    flex: none;
    width: 0;
    height: 0;
    border: 3px solid transparent;
    border-top: 4px solid #d9dbdd;
    border-bottom: 0;
  }
  .caret.mid {
    border-width: 5px 4px 0;
  }
  .caret.large {
    border-width: 5px 5px 0;
  }
  .caret.up {
    border: 4px solid transparent;
    border-top: 0;
    border-bottom: 5px solid #55585c;
  }

  /* title bar */
  .titlebar {
    display: grid;
    grid-template-columns: 458px 1fr auto auto;
    align-items: center;
    height: 44px;
    padding-bottom: 6px;
    box-sizing: border-box;
  }
  .quick {
    display: flex;
    align-items: center;
    gap: 10px;
    padding-left: 17px;
  }
  .app {
    gap: 7px;
    margin-right: 4px;
  }
  .nudge {
    margin: 0 -1px;
  }
  .dim {
    opacity: 0.6;
  }
  .share {
    gap: 7px;
    color: #7fbdee;
  }
  h1 {
    display: flex;
    justify-content: center;
    gap: 16px;
    margin: 0;
    font-size: 14px;
    font-weight: 400;
    white-space: nowrap;
  }
  .info {
    display: flex;
    align-items: center;
    gap: 9px;
  }
  .search {
    box-sizing: border-box;
    width: 223px;
    height: 26px;
    margin-right: -3px;
    padding-left: 4px;
    background: #485163;
    font-style: italic;
  }
  .search::placeholder {
    color: #b4bac2;
    opacity: 1;
  }
  .account {
    margin-right: 4px;
  }
  .account span:first-child {
    width: 108px;
    text-align: left;
  }
  .sep {
    width: 1px;
    height: 22px;
    margin: 0 2px;
    background: #4a515b;
  }
  .controls {
    display: flex;
    margin-left: 82px;
  }
  .controls button {
    justify-content: center;
    width: 58px;
    height: 36px;
  }

  /* ribbon */
  .ribbon-tabs {
    display: flex;
    height: 25px;
    padding-left: 8px;
    color: #a9afb7;
  }
  .ribbon-tabs button {
    padding: 0 12px;
  }
  .ribbon-tabs .active {
    background: #3b4453;
    color: #f0f2f4;
  }
  .ribbon-tabs .collapse {
    gap: 6px;
    margin-left: 12px;
  }
  .ribbon {
    display: grid;
    grid-template-columns: 279fr 272fr 185fr 341fr 151fr 277fr 85fr 121fr 113fr 82fr;
    height: 124px;
    margin: 0 5px;
    background: #3b4453;
  }
  .panel {
    display: flex;
    flex-direction: column;
    min-width: 0;
    box-sizing: border-box;
    border-right: 1px solid #262d38;
  }
  .panel:last-child {
    border-right: 0;
  }
  .body {
    flex: 1;
    display: grid;
    align-items: start;
  }
  footer {
    position: relative;
    display: flex;
    justify-content: center;
    height: 23px;
  }
  footer button {
    gap: 8px;
  }
  .launch {
    position: absolute;
    right: 8px;
    top: 9px;
  }
  .properties footer {
    padding-right: 12px;
  }
  .view footer {
    justify-content: flex-start;
    padding-left: 7px;
  }
  .view .launch {
    right: 12px;
  }
  .big {
    flex-direction: column;
    justify-self: stretch;
    padding-top: 8px;
    white-space: normal;
  }
  .big :global(svg) {
    overflow: visible;
  }
  .big span:not(.caret) {
    margin-top: 5px;
  }
  .big .caret {
    margin-top: 3px;
  }
  .stack {
    padding-top: 4px;
  }
  .row {
    display: flex;
    align-items: center;
    height: 31px;
  }
  .labelled {
    gap: 7px;
  }
  .drop {
    margin-left: 10px;
  }
  .on {
    background: #40668e;
  }
  .row .on {
    box-sizing: border-box;
    height: 28px;
    margin: 0 -5px;
    padding: 0 4px;
    border: 1px solid #7ab8ea;
  }
  .draw .body {
    grid-template-columns: 56px 50px 70px 46px 1fr;
  }
  .draw .stack {
    padding-left: 7px;
  }
  .modify .body {
    grid-template-columns: 91px 88px 51px 1fr;
    padding-left: 7px;
  }
  .annotation .body {
    grid-template-columns: 60px 72px 1fr;
  }
  .annotation .stack {
    padding-left: 8px;
  }
  .layers .body,
  .properties .body {
    grid-template-columns: 78px 1fr;
  }
  .block .body {
    grid-template-columns: 52px 47px 1fr;
  }
  .block .big {
    padding-top: 7px;
  }
  .block .stack {
    padding-left: 8px;
  }
  .groups .body {
    grid-template-columns: 52px 1fr;
  }
  .groups .stack {
    padding-left: 4px;
  }
  .utilities .body {
    grid-template-columns: 90px 1fr;
  }
  .clipboard .body {
    grid-template-columns: 68px 1fr;
  }
  .clipboard .drop {
    margin-left: 7px;
  }
  .view .body {
    grid-template-columns: 78px;
  }
  .combo {
    box-sizing: border-box;
    display: flex;
    align-items: center;
    flex: 1;
    height: 28px;
    padding: 0 3px 0 7px;
    border: 1px solid #2a313c;
    background: #4b566a;
  }
  .combo.layer {
    gap: 6px;
    margin: 3px 1px 0 0;
    padding-left: 5px;
  }
  .swatch {
    box-sizing: border-box;
    width: 18px;
    height: 18px;
    border: 1px solid #f4c8ee;
    background: #ff00bf;
  }
  .prop .swatch {
    width: 20px;
    height: 20px;
    margin-right: 6px;
  }
  .stroke {
    width: 80px;
    height: 1px;
    margin-right: 2px;
    background: #fff;
  }
  .grid {
    display: grid;
    grid-template-columns: repeat(5, 30px);
    padding-left: 4px;
  }
  .grid .tool {
    height: 30px;
  }
  .prop {
    display: flex;
    align-items: center;
    gap: 3px;
    margin: 2px 1px 0;
  }
  .properties .stack {
    padding-top: 6px;
  }

  /* drawing tabs */
  .file-tabs {
    display: flex;
    align-items: center;
    gap: 11px;
    height: 33px;
    padding: 3px 24px 0;
    box-sizing: border-box;
  }
  .file-tabs .active,
  .layouts .active {
    height: 30px;
    background: #3b4453;
    color: #fff;
    font-weight: 700;
    clip-path: polygon(11px 0, 100% 0, calc(100% - 11px) 100%, 0 100%);
  }
  .file-tabs .active {
    align-self: flex-end;
    gap: 11px;
    margin-left: 12px;
    padding: 0 15px 0 22px;
  }

  /* drawing area */
  .viewport {
    position: relative;
    flex: 1;
    min-height: 600px;
    border-top: 5px solid #3b4453;
    border-bottom: 5px solid #3b4453;
    margin: 0 4px;
    background: #21282f;
  }
  .vp-head {
    display: flex;
    justify-content: space-between;
    padding: 5px 12px 0 5px;
    color: #f2f2f2;
  }
  .vp-head div {
    display: flex;
    gap: 12px;
    padding-top: 2px;
  }
  .scene {
    position: absolute;
    left: calc(50% - 194px);
    top: 35px;
  }
  .axis text {
    font-family: Roboto, sans-serif;
    font-size: 22px;
    font-weight: 300;
    text-anchor: middle;
  }
  .crosshair {
    position: absolute;
    right: 300px;
    top: 306px;
  }
  .viewcube {
    position: absolute;
    right: -4px;
    top: 57px;
  }
  .compass text {
    fill: #b9bbbd;
    font-weight: 700;
  }
  .faces text {
    fill: #45484c;
    font-weight: 700;
  }
  .ucs {
    position: absolute;
    right: 45px;
    top: 204px;
    box-sizing: border-box;
    display: flex;
    align-items: center;
    width: 81px;
    height: 21px;
    padding: 0 5px 0 4px;
    border: 1px solid #8a8e98;
    border-radius: 5px;
    background: #9fa2ad;
    color: #676b74;
    font-size: 12px;
    font-weight: 600;
  }
  .ucs .caret {
    border-top-color: #b4b7c0;
  }
  .navbar {
    position: absolute;
    right: 3px;
    top: 255px;
    box-sizing: border-box;
    display: flex;
    flex-direction: column;
    align-items: center;
    gap: 6px;
    width: 40px;
    height: 259px;
    padding: 1px 0;
    border-radius: 4px;
    background: #585d61;
    box-shadow: 0 0 0 1px #15191e;
  }
  .navbar .edge {
    align-self: flex-end;
    margin: 0 2px 3px 0;
  }
  .navbar .last {
    margin: auto 2px 0 0;
  }
  .navbar .caret {
    margin-top: 2px;
    border-top-color: #3b4046;
  }
  .navbar hr {
    width: 36px;
    height: 1px;
    margin: 0;
    border: 0;
    background: #62676b;
  }
  .command {
    position: absolute;
    left: 174px;
    right: 164px;
    bottom: 28px;
    font-family: "DejaVu Sans Mono", monospace;
    font-size: 15px;
  }
  .history {
    display: flex;
    flex-direction: column;
    align-items: flex-start;
    gap: 6px;
    padding: 0 0 3px 79px;
  }
  .history span {
    padding: 0 5px;
    border-radius: 2px;
    background: #505254;
    color: #e4e5e6;
    font-size: 14px;
    line-height: 18px;
  }
  .history span:nth-child(1) {
    background: #46494c;
    color: #9b9da0;
  }
  .history span:nth-child(2) {
    background: #4b4e50;
    color: #b9bbbd;
  }
  .line {
    display: flex;
    height: 39px;
    align-items: center;
  }
  .handle {
    display: flex;
    align-items: center;
    box-sizing: border-box;
    width: 72px;
    height: 39px;
    padding-left: 5px;
    gap: 9px;
    background: #272d3a;
  }
  .handle button:last-child {
    margin-left: 5px;
  }
  .entry {
    flex: 1;
    display: flex;
    align-items: center;
    height: 37px;
    padding: 0 5px;
    border-radius: 3px;
    background: #bcbdbf;
  }
  .entry .caret.large {
    margin: 0 8px 0 2px;
    border-top-color: #55585c;
  }
  .entry input {
    flex: 1;
    color: #3a3d41;
    font-style: italic;
  }
  .entry input::placeholder {
    color: #5c5f63;
    opacity: 1;
  }

  /* bottom bar */
  .bottom {
    display: flex;
    justify-content: space-between;
    height: 38px;
  }
  .layouts {
    display: flex;
    align-items: center;
    gap: 11px;
    height: 30px;
    padding-left: 24px;
  }
  .layouts .active {
    padding: 0 21px;
  }
  .status {
    display: flex;
    padding: 2px 5px 0 0;
  }
  .cell {
    display: flex;
    align-items: center;
    height: 31px;
    margin-left: 3px;
    background: #3b4453;
  }
  .cell.tight {
    margin-left: 1px;
  }
  .cell.empty {
    width: 4px;
  }
  .cell button {
    justify-content: center;
    height: 28px;
  }
  .cell .model {
    width: 59px;
    font-size: 15px;
  }
  .slot {
    width: 30px;
  }
  .slot.on {
    background: #5f8fc4;
  }
  .arrow {
    width: 20px;
  }
  .ratio {
    width: 42px;
    gap: 4px;
  }
</style>
